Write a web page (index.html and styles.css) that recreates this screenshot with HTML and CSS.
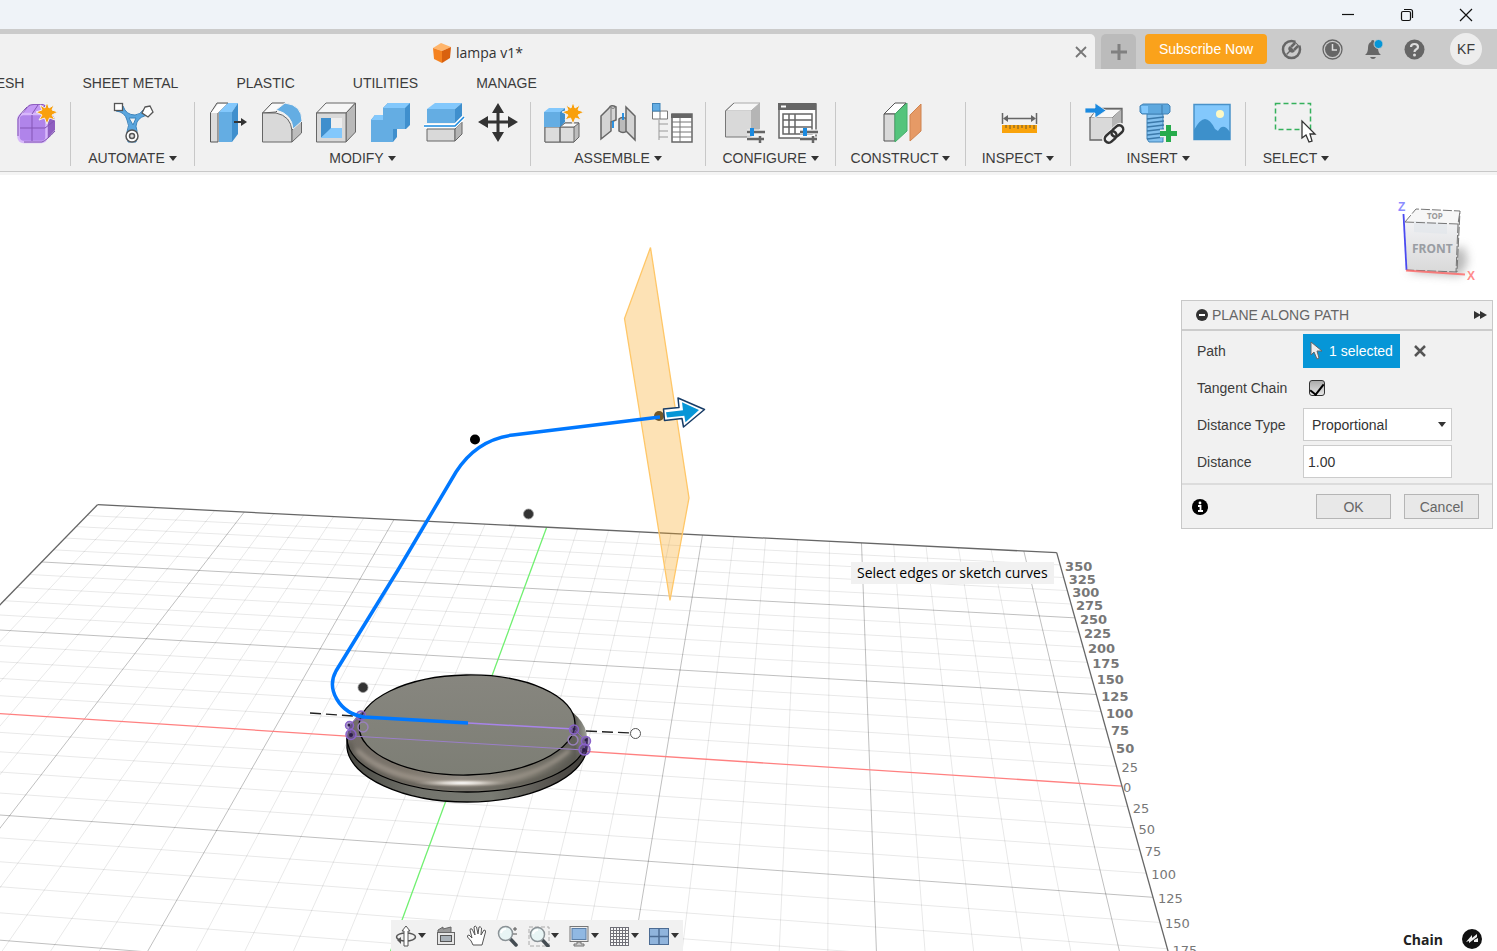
FILE: index.html
```html
<!DOCTYPE html>
<html lang="en">
<head>
  <meta charset="UTF-8" />
  <meta name="viewport" content="width=device-width, initial-scale=1" />
  <title>lampa v1*</title>
  <link rel="stylesheet" href="styles.css">
</head>
<body>
  <svg class="defs" aria-hidden="true">
    <defs>
      <path id="star" d="M0-11L2-5L7-8L5-3L11-1L5 2L8 7L2.500 5L0 11L-2.500 5L-8 7L-5 2L-11-1L-5-3L-7-8L-2-5Z" />
      <g id="sliders">
        <path d="M0 3H18M0 10H18" stroke="#f1f1f1" stroke-width="5" />
        <path d="M0 3H18M0 10H17M13 7V14" stroke="#666" stroke-width="2.500" />
        <path d="M5-1V7" stroke="#1b8ae0" stroke-width="4" />
      </g>
      <g id="glass">
        <path d="M12.500 13L19 20" stroke="#444c52" stroke-width="3.500" stroke-linecap="round" />
        <circle cx="8.500" cy="8.500" r="7" fill="#e8f5f5" stroke="#8a9296" stroke-width="1.500" />
        <path d="M4 8Q5 4 9 4" stroke="#fff" stroke-width="2" fill="none" />
      </g>
    </defs>
  </svg>

  <header class="titlebar">
    <button class="win-btn" aria-label="Minimize"><svg width="14" height="14" viewBox="0 0 14 14"><path d="M1 6.500H13" /></svg></button>
    <button class="win-btn" aria-label="Restore"><svg width="14" height="14" viewBox="0 0 14 14"><rect x="1.500" y="3.500" width="9" height="9" rx="1.500" /><path d="M4 1.500H10.500Q12.500 1.500 12.500 3.500V10" /></svg></button>
    <button class="win-btn" aria-label="Close"><svg width="14" height="14" viewBox="0 0 14 14"><path d="M1 1L13 13M13 1L1 13" /></svg></button>
  </header>

  <div class="tabbar">
    <div class="doc-tab">
      <div class="doc-name">
        <svg width="20" height="20" viewBox="0 0 20 20"><path d="M1 5L9 0L19 4L10 8Z" fill="#ffb56b" /><path d="M1 5L10 8V20L2 16Z" fill="#f58220" /><path d="M10 8L19 4L18 15L10 20Z" fill="#d9610f" /></svg>
        <span>lampa v1*</span>
      </div>
      <button class="tab-close" aria-label="Close tab"><svg width="12" height="12" viewBox="0 0 12 12"><path d="M1 1L11 11M11 1L1 11" stroke="#777" stroke-width="1.800" /></svg></button>
    </div>
    <button class="new-tab" aria-label="New tab"><svg width="16" height="16" viewBox="0 0 16 16"><path d="M8 0V16M0 8H16" stroke="#808080" stroke-width="3" /></svg></button>
    <button class="subscribe">Subscribe Now</button>
    <button class="top-icon" aria-label="Extensions"><svg width="21" height="21" viewBox="0 0 21 21"><circle cx="10.500" cy="10.500" r="8.500" fill="none" stroke="#666" stroke-width="2.500" /><path d="M5 15L8 12Q6 9 9 7L14 12Q12 15 9 13L6 16Z" fill="#666" /><path d="M10 8L14 4M13 11L17 7" stroke="#666" stroke-width="2.500" /><path d="M15 2L19 6" stroke="#cbcbcb" stroke-width="2" /></svg></button>
    <button class="top-icon" aria-label="Job status"><svg width="21" height="21" viewBox="0 0 21 21"><circle cx="10.500" cy="10.500" r="9.500" fill="#cbcbcb" stroke="#666" stroke-width="1.300" /><circle cx="10.500" cy="10.500" r="7.500" fill="#666" /><path d="M10.500 5V11H15" fill="none" stroke="#ddd" stroke-width="1.500" /></svg></button>
    <button class="top-icon" aria-label="Notifications"><svg width="21" height="21" viewBox="0 0 21 21"><path d="M2 16Q5 14 5 9Q5 4 8 3Q8 1 10 1Q11 1 12 3Q15 4 15 9Q15 14 18 16Z" fill="#666" /><path d="M7 18H13Q12 20 10 20Q8 20 7 18" fill="#666" /><circle cx="15.500" cy="5" r="4.500" fill="#0696d7" stroke="#cbcbcb" /></svg></button>
    <button class="top-icon" aria-label="Help"><svg width="21" height="21" viewBox="0 0 21 21"><circle cx="10.500" cy="10.500" r="10" fill="#666" /><path d="M7 8Q7 5 10.500 5Q14 5 14 8Q14 9.500 12 10.500Q10.500 11.500 10.500 13" fill="none" stroke="#ddd" stroke-width="2.200" /><circle cx="10.500" cy="16" r="1.500" fill="#ddd" /></svg></button>
    <button class="avatar">KF</button>
  </div>

  <div class="ribbon">
    <nav class="ribbon-tabs">
      <a href="#">MESH</a>
      <a href="#">SHEET METAL</a>
      <a href="#">PLASTIC</a>
      <a href="#">UTILITIES</a>
      <a href="#">MANAGE</a>
    </nav>
    <div class="tools">
      <div class="group group-first">
        <div class="icons">
          <button aria-label="Create form"><svg viewBox="0 0 40 40">
            <path d="M2 16L10 5Q12 2 16 2H26Q30 3 34 10L38 17V28L30 37Q27 40 24 40H7Q1 40 1 34Z" fill="#8f5fc0" />
            <path d="M3 15L11 5Q13 3 17 3H27L22 12H7Z" fill="#c59af5" />
            <rect x="1.500" y="12" width="28" height="28" rx="5" fill="#b084ea" stroke="#d8b8fb" stroke-width="2.500" />
            <path d="M3 26H28L37 19M15 13V39M15 12L21 3" stroke="#8355b5" fill="none" />
            <path d="M1 34V17Q2 13 10 5M7 40H25Q30 38 38 29" stroke="#7c4fae" fill="none" />
            <use href="#star" x="30" y="11" fill="#f9a00c" stroke="#f1f1f1" stroke-width="1" /></svg></button>
        </div>
      </div>
      <div class="group group-automate">
        <div class="icons">
          <button aria-label="Automated modeling"><svg viewBox="0 0 40 40">
            <path d="M3 7Q9 6 10 4Q13 13 22 13Q27 13 31 7L36 13Q27 14 24 20Q22 24 24 29L23 40H15L14 30Q17 23 14 18Q12 10 3 9Z" fill="#5aa6de" stroke="#3b83bb" />
            <path d="M16 16H23L20 23Z" fill="#f1f1f1" stroke="#3b83bb" />
            <rect x="1.500" y="1.500" width="8" height="7" fill="#fff" stroke="#555" stroke-width="1.300" />
            <path d="M32 5L37 4L40 10L35 15L29 11Z" fill="#fff" stroke="#555" stroke-width="1.300" />
            <circle cx="19" cy="34" r="6" fill="#fff" stroke="#555" stroke-width="1.500" /><circle cx="19" cy="34" r="2.500" fill="#ddd" stroke="#555" stroke-width="1.500" /></svg></button>
        </div>
        <button class="label">AUTOMATE</button>
      </div>
      <div class="group group-modify">
        <div class="icons">
          <button aria-label="Press pull"><svg viewBox="0 0 40 40">
            <path d="M2.500 11L9 1H20L10 11V40H2.500Z" fill="#dcdcdc" stroke="#555" /><path d="M3 11L10 2H19L10 11Z" fill="#fff" />
            <path d="M11 10H24V40H11Z" fill="#64ade3" /><path d="M11 10L20 1H30L24 10Z" fill="#83c8fc" /><path d="M24 10L30 1V32L24 40Z" fill="#3f8fcd" />
            <path d="M26 20H34" stroke="#333" stroke-width="2" /><path d="M33 16L39 20L33 24Z" fill="#333" /></svg></button>
          <button aria-label="Fillet"><svg viewBox="0 0 40 40">
            <path d="M.5 11L10 1H23L14 10Z" fill="#fafafa" stroke="#555" />
            <path d="M.5 11H14Q29 14 30 29V40H.5Z" fill="#d9d9d9" stroke="#666" /><path d="M30 28L39.500 18V31L30 40Z" fill="#bdbdbd" stroke="#666" />
            <path d="M14 8L23 1Q40 3 40 19L31 27Q30 12 14 8" fill="#64ade3" stroke="#f1f1f1" /></svg></button>
          <button aria-label="Shell"><svg viewBox="0 0 40 40">
            <path d="M.5 11L10 1H39.500L30 11Z" fill="#f6f6f6" stroke="#666" /><path d="M30 11L39.500 1V30L30 40Z" fill="#b9b9b9" stroke="#666" />
            <path d="M.5 11H30V40H.5Z" fill="#d9d9d9" stroke="#666" /><path d="M5 16H26V36H5Z" fill="#fff" />
            <path d="M5 16H15V27L5 36Z" fill="#3f8fcd" /><path d="M5 36L15 26H26V36Z" fill="#83c8fc" /><path d="M15 16H26V26H15Z" fill="#eee" /></svg></button>
          <button aria-label="Combine"><svg viewBox="0 0 40 40">
            <path d="M1 18L5 13H13V6L18 1H40V23L36 27H27V35L23 40H1Z" fill="#3f8fcd" />
            <path d="M1 18H13V6H35V27H23V40H1Z" fill="#64ade3" /><path d="M13 6L18 1H40L35 6ZM1 18L5 13H13V18Z" fill="#83c8fc" /></svg></button>
          <button aria-label="Split body"><svg viewBox="0 0 40 40">
            <path d="M3 7L11 1H38L31 7Z" fill="#83c8fc" /><path d="M3 7H31V21H3Z" fill="#64ade3" /><path d="M31 7L38 1V14L31 21Z" fill="#3f8fcd" />
            <path d="M3 27H31V39H3Z" fill="#d9d9d9" stroke="#666" /><path d="M31 27L38 20V32L31 39Z" fill="#b5b5b5" stroke="#666" />
            <path d="M0 24H31L40 15" fill="none" stroke="#fff" stroke-width="4" /><path d="M0 24H31L40 15" fill="none" stroke="#1b8ae0" stroke-width="1.500" /></svg></button>
          <button aria-label="Move"><svg viewBox="0 0 40 40">
            <path d="M20 6V34M6 20H34" stroke="#333" stroke-width="3" /><path d="M20 1L26 11H14ZM20 40L26 30H14ZM0 20L10 14V26ZM40 20L30 14V26Z" fill="#333" /></svg></button>
        </div>
        <button class="label">MODIFY</button>
      </div>
      <div class="group group-wide">
        <div class="icons">
          <button aria-label="New component"><svg viewBox="0 0 40 40">
            <path d="M1 25H16L21 21H35V35L30 40H1Z" fill="#bdbdbd" stroke="#666" /><path d="M1 25H30V40H1Z" fill="#dcdcdc" stroke="#666" /><path d="M16 25L21 21H35L30 25Z" fill="#f8f8f8" stroke="#666" /><path d="M16 25V40" stroke="#666" stroke-width="1.500" />
            <path d="M0 10L5 6H21L16 10Z" fill="#83c8fc" /><path d="M0 10H16V25H0Z" fill="#64ade3" /><path d="M16 10L21 6V20L16 25Z" fill="#3f8fcd" />
            <use href="#star" x="29" y="11" fill="#f9a00c" stroke="#f1f1f1" stroke-width="1" /></svg></button>
          <button aria-label="Joint"><svg viewBox="0 0 40 40">
            <path d="M3 14L11 6Q13 2 18 5V18L13 20V29L3 37Z" fill="#d4d4d4" stroke="#666" stroke-width="1.500" /><path d="M13 20V6M12 5Q15 8 18 5" stroke="#777" fill="none" />
            <path d="M21 17Q24 14 29 17V29Q25 32 21 29Z" fill="#bbb" stroke="#666" stroke-width="1.500" /><path d="M28 5L37 14V38L28 29Z" fill="#d4d4d4" stroke="#666" stroke-width="1.500" />
            <path d="M15 19V26M25 11V18" stroke="#1b8ae0" stroke-width="1.800" /></svg></button>
          <button aria-label="Bill of materials"><svg viewBox="0 0 40 40">
            <path d="M.5 9H15.500V17H.5ZM8 9V17" fill="#fff" stroke="#777" /><rect x=".5" y="1.500" width="7.500" height="7.500" fill="#64ade3" stroke="#3f83b8" />
            <path d="M7 18V38M7 22H16M7 29H16M7 35H16" stroke="#999" fill="none" />
            <rect x="20" y="12" width="20" height="28" fill="#fff" stroke="#666" stroke-width="1.500" /><path d="M19 14H40" stroke="#666" stroke-width="4" /><path d="M20 20H40M20 25H40M20 30H40M20 35H40M28 16V40" stroke="#777" /></svg></button>
        </div>
        <button class="label">ASSEMBLE</button>
      </div>
      <div class="group group-mid">
        <div class="icons">
          <button aria-label="Configure model"><svg viewBox="0 0 40 40">
            <path d="M1 9L10 1H36L27 9Z" fill="#f6f6f6" stroke="#aaa" /><path d="M27 9L36 1V27L27 35Z" fill="#b5b5b5" /><path d="M1.500 9H27V35H1.500Z" fill="#d9d9d9" /><path d="M10 1L1.500 9V35H27" fill="none" stroke="#777" />
            <use href="#sliders" x="23" y="27" /></svg></button>
          <button aria-label="Configuration table"><svg viewBox="0 0 40 40">
            <rect x="1" y="2" width="37" height="34" fill="#fff" stroke="#666" stroke-width="1.500" /><path d="M0 4.500H38" stroke="#666" stroke-width="7" /><path d="M3 4.500H8" stroke="#fff" stroke-width="2" />
            <path d="M5 12H34V32H5ZM5 18H34M5 25H34M11 12V32M17 12V32" fill="none" stroke="#666" stroke-width="1.500" />
            <use href="#sliders" x="22" y="27" /></svg></button>
        </div>
        <button class="label">CONFIGURE</button>
      </div>
      <div class="group group-mid">
        <div class="icons">
          <button aria-label="Offset plane"><svg viewBox="0 0 40 40">
            <path d="M3 12L14 1H25L14 12Z" fill="#fff" stroke="#555" /><path d="M3 12H14V39H3Z" fill="#d9d9d9" stroke="#555" />
            <path d="M14 12L26 1V29L14 40Z" fill="#55c47c" stroke="#45b06b" /><path d="M29 13L40 2V29L29 39Z" fill="#e69a66" stroke="#cf8450" /></svg></button>
        </div>
        <button class="label">CONSTRUCT</button>
      </div>
      <div class="group group-small">
        <div class="icons">
          <button aria-label="Measure"><svg viewBox="0 0 40 40">
            <path d="M4.500 11V22M38.500 11V22M7 16.500H36" stroke="#666" stroke-width="1.500" /><path d="M5 16.500L10 13V20ZM38 16.500L33 13V20Z" fill="#666" />
            <rect x="4" y="23" width="35" height="8" fill="#f9a30b" /><path d="M8 23V26M12 23V27M16 23V26M20 23V27M24 23V26M28 23V27M32 23V26M36 23V27" stroke="#6d5930" /></svg></button>
        </div>
        <button class="label">INSPECT</button>
      </div>
      <div class="group group-wide">
        <div class="icons">
          <button aria-label="Insert derive"><svg viewBox="0 0 40 40">
            <path d="M6 16L13 7H38L28 16Z" fill="#f8f8f8" stroke="#666" /><path d="M28 16L38 7V29L28 38Z" fill="#b5b5b5" /><path d="M6 16H28V38H6Z" fill="#d9d9d9" /><path d="M6 15V38H25M13 6.500H38V24" fill="none" stroke="#666" stroke-width="1.300" />
            <path d="M1 6H11V1L22 8.500L11 16V11H1Z" fill="#1b8ae0" stroke="#f1f1f1" stroke-width=".8" />
            <g fill="none" transform="rotate(-42 30 32)"><path d="M22 32H38" stroke="#f1f1f1" stroke-width="12" stroke-linecap="round" /><rect x="19" y="28" width="13" height="8" rx="4" stroke="#333" stroke-width="2.500" /><rect x="28" y="28" width="13" height="8" rx="4" stroke="#333" stroke-width="2.500" /></g></svg></button>
          <button aria-label="Insert fastener"><svg viewBox="0 0 40 40">
            <path d="M9 12H25V40H11L9 37Z" fill="#83c0ee" stroke="#3f83b8" /><path d="M9 17L26 15M9 21L26 19M9 25L26 23M9 29L26 27M9 33L26 31M9 37L26 35" stroke="#3b79aa" stroke-width="1.300" />
            <path d="M2 4L5 2H30L32 4V10L30 12H4L2 10Z" fill="#5ea8de" stroke="#4383b7" /><path d="M3 4H10V11H4Z" fill="#83c8fc" /><path d="M24 3V12" stroke="#3b79aa" />
            <path d="M30.500 23V40M22 31.500H39" stroke="#f1f1f1" stroke-width="8" /><path d="M30.500 23V40M22 31.500H39" stroke="#27ab4c" stroke-width="5" /></svg></button>
          <button aria-label="Insert canvas"><svg viewBox="0 0 40 40">
            <rect x="2" y="2.500" width="36" height="35" fill="#83c8fc" stroke="#4a92c9" stroke-width="1.500" /><path d="M2 28Q8 17 13 17Q18 17 23 27L26 29Q31 20 38 30V38H2Z" fill="#3d90cb" /><circle cx="28" cy="12" r="4" fill="#fdf9c4" /></svg></button>
        </div>
        <button class="label">INSERT</button>
      </div>
      <div class="group group-select">
        <div class="icons">
          <button aria-label="Select"><svg viewBox="0 0 40 40">
            <rect x="-.5" y="1.500" width="35" height="26" fill="none" stroke="#35b15c" stroke-width="1.500" stroke-dasharray="5 3" />
            <path d="M26 19V36L30 33L33 40L36 39L34 32H39Z" fill="#fff" stroke="#333" stroke-width="1.300" /></svg></button>
        </div>
        <button class="label">SELECT</button>
      </div>
    </div>
  </div>

  <main class="canvas">
    <svg class="scene" viewBox="0 175 1497 776" preserveAspectRatio="xMinYMin slice">
      <defs>
        <linearGradient id="side"><stop offset="0" stop-color="#484842" /><stop offset=".3" stop-color="#73746d" /><stop offset=".6" stop-color="#797b73" /><stop offset=".85" stop-color="#57544f" /><stop offset="1" stop-color="#403e3a" /></linearGradient>
        <linearGradient id="rim"><stop offset="0" stop-color="#706b64" /><stop offset=".25" stop-color="#7e776d" /><stop offset=".48" stop-color="#8f8a82" /><stop offset=".75" stop-color="#77746a" /><stop offset=".95" stop-color="#5f5e57" /><stop offset="1" stop-color="#a0a29a" /></linearGradient>
        <linearGradient id="face" x2="0" y2="1"><stop offset="0" stop-color="#87867f" /><stop offset="1" stop-color="#7d7e75" /></linearGradient>
        <radialGradient id="shine"><stop offset="0" stop-color="#fff" /><stop offset=".4" stop-color="#e4dfd8" stop-opacity=".8" /><stop offset="1" stop-color="#a8a095" stop-opacity="0" /></radialGradient>
        <linearGradient id="cube" x2="0" y2="1"><stop offset="0" stop-color="#f1f2f4" /><stop offset="1" stop-color="#d9d9d9" /></linearGradient>
        <filter id="soft" x="-10%" y="-50%" width="120%" height="200%"><feGaussianBlur stdDeviation="2" /></filter>
        <filter id="shadow" x="-50%" y="-50%" width="200%" height="200%"><feGaussianBlur stdDeviation="5" /></filter>
        <clipPath id="rim-clip"><ellipse cx="467" cy="738" rx="120" ry="54" /></clipPath>
      </defs>

      <g id="grid"></g>
      <g id="ruler" class="ruler"></g>

      <!-- lamp base -->
      <path d="M347 738V748C350 777 402 802 467 802S584 777 587 748V738Z" fill="url(#side)" stroke="#000" stroke-width="1.300" />
      <ellipse cx="467" cy="738" rx="120" ry="54" fill="url(#rim)" />
      <g clip-path="url(#rim-clip)">
        <g fill="none" filter="url(#soft)">
          <path d="M349 742C357 774 410 789 467 789S576 774 585 742" stroke="#57554e" stroke-width="3" />
          <path d="M357 750C380 773 420 783 463 783S540 775 570 750" stroke="#aba297" stroke-width="3" />
        </g>
        <ellipse cx="462" cy="783" rx="48" ry="4" fill="url(#shine)" />
      </g>
      <path d="M347 738C347 768 401 792 467 792S587 768 587 738" fill="none" stroke="#000" stroke-width="1.300" />
      <ellipse cx="467" cy="725" rx="108" ry="50" fill="url(#face)" stroke="#000" stroke-width="1.300" transform="rotate(-1 467 725)" />

      <path d="M310 713L353 716M586 731L630 733" stroke="#222" stroke-width="1.300" stroke-dasharray="11 5" />
      <circle cx="635.500" cy="733.500" r="5" fill="#fff" stroke="#555" />
      <g fill="none" stroke="#8a63c9" stroke-width="1.500">
        <path d="M468 723L574 729" stroke="#a884ea" />
        <path d="M352 736L584 750" stroke="#9a7fc8" stroke-width="1" />
        <circle cx="363" cy="727" r="5" stroke="#9880bb" /><circle cx="573" cy="740" r="5" stroke="#9880bb" />
        <path d="M361 715L349 725L351 735M574 729L586 741L584 750" stroke-width="1" />
        <g fill="#5d3f94" fill-opacity=".5"><circle cx="361" cy="715.500" r="4.500" /><circle cx="349.500" cy="725.500" r="4" /><circle cx="351" cy="734.500" r="5" /><circle cx="574" cy="729.500" r="4.500" /><circle cx="586" cy="741" r="4.500" /><circle cx="584.500" cy="749.500" r="5.500" /></g>
        <g fill="#2c1d48" stroke="none"><circle cx="349" cy="725" r="1.500" /><circle cx="351" cy="735" r="2" /><circle cx="574" cy="729" r="1.500" /><circle cx="586" cy="740" r="1.500" /><circle cx="584" cy="750" r="2" /></g>
      </g>

      <!-- selected path, construction plane and drag arrow -->
      <circle cx="659" cy="416" r="5" fill="#333" />
      <path d="M650.500 247.500L689 498L670 600.500L624.500 318.500Z" fill="#faa61a" fill-opacity=".32" stroke="#ffc768" stroke-width="1.300" />
      <path d="M660 417L513 435C489 438 470 450 456 472L398 570L336 671C326 689 339 713 364 717L468 723" fill="none" stroke="#0078ff" stroke-width="3.500" />
      <g><circle cx="475" cy="439.500" r="5" fill="#000" /><circle cx="528.500" cy="514" r="5" fill="#333" stroke="#999" stroke-width=".8" /><circle cx="363" cy="687.500" r="5" fill="#333" stroke="#999" stroke-width=".8" /></g>
      <path d="M663.500 409L679 407.500L678 398L704.500 409.500L683.500 427L682 418.500L664.500 420.500Z" fill="#fff" stroke="#173c66" stroke-width="1.500" stroke-linejoin="round" />
      <path d="M666 412.300L683 410.300L682 402.300L699 410L685.500 422.300L684.300 415.800L667 417.500Z" fill="#0696d7" />

      <!-- view cube -->
      <path d="M1406 272L1460 276L1468 262L1464 246L1440 255Z" fill="#777" opacity=".5" filter="url(#shadow)" />
      <path d="M1405 222L1416 209L1460 211L1458 224Z" fill="#f7f7f7" /><path d="M1458 224L1460 211L1458 258L1456 272Z" fill="#ccc" />
      <path d="M1405 222L1458 224L1456 272L1407 270Z" fill="url(#cube)" />
      <path d="M1414 221L1447 223V234L1414 232Z" fill="#dfe4ea" opacity=".6" />
      <path d="M1405 222L1416 209L1460 211L1457 272L1407 270M1405 222L1458 224L1460 211M1458 224L1456 272" fill="none" stroke="#777" stroke-dasharray="9 2" />
      <path d="M1403.500 214L1406.500 270" stroke="#4a4af0" stroke-width="1.800" /><path d="M1406 270.500L1465 274.500" stroke="#f66" stroke-width="1.800" opacity=".8" />
      <text class="cube-front" x="1412" y="253">FRONT</text><text class="cube-top" x="1427" y="219">TOP</text>
      <text class="axis-z" x="1398" y="211">Z</text><text class="axis-x" x="1467" y="280">X</text>
    </svg>

    <div class="tooltip">Select edges or sketch curves</div>

    <form class="panel">
      <div class="panel-head">
        <svg width="12" height="12" viewBox="0 0 12 12"><circle cx="6" cy="6" r="6" fill="#333" /><path d="M3 6H9" stroke="#fff" stroke-width="2" /></svg>
        <h2>PLANE ALONG PATH</h2>
        <svg width="13" height="8" viewBox="0 0 13 8"><path d="M0 0L7 4L0 8ZM6 0L13 4L6 8Z" fill="#333" /></svg>
      </div>
      <div class="panel-body">
        <label for="path">Path</label>
        <div class="field">
          <button type="button" id="path" class="selected"><svg width="13" height="19" viewBox="0 0 13 19"><path d="M1 1V14L4 11L7 18L9 17L7 10H12Z" fill="#eee" stroke="#666" /></svg>1 selected</button>
          <button type="button" class="clear" aria-label="Clear selection"><svg width="12" height="12" viewBox="0 0 12 12"><path d="M1 1L11 11M11 1L1 11" stroke="#555" stroke-width="2.500" /></svg></button>
        </div>
        <label for="tangent">Tangent Chain</label>
        <div class="field"><input type="checkbox" id="tangent" checked></div>
        <label for="type">Distance Type</label>
        <div class="field select"><select id="type"><option>Proportional</option><option>Physical</option></select></div>
        <label for="distance">Distance</label>
        <div class="field"><input type="text" id="distance" value="1.00"></div>
      </div>
      <div class="panel-foot">
        <svg width="16" height="16" viewBox="0 0 16 16"><circle cx="8" cy="8" r="8" fill="#000" /><path d="M6 7H8.500V12M6 12H11" stroke="#fff" stroke-width="1.800" fill="none" /><circle cx="8" cy="4" r="1.400" fill="#fff" /></svg>
        <button type="button">OK</button>
        <button type="button">Cancel</button>
      </div>
    </form>

    <div class="navbar">
      <button class="more" aria-label="Orbit"><svg viewBox="0 0 22 22"><ellipse cx="11" cy="12" rx="9.500" ry="4" fill="none" stroke="#555" stroke-width="1.500" /><path d="M9 21V6H7L11 1L15 6H13V21Z" fill="#fff" stroke="#555" /><path d="M6 12V19L2 15Z" fill="#555" /></svg></button>
      <button aria-label="Look at"><svg viewBox="0 0 22 22"><path d="M3 8V5L8 2V4L12 3L16 2V8" fill="#999" stroke="#666" /><rect x="2.500" y="7.500" width="17" height="12" fill="#e6e6e6" stroke="#666" /><rect x="5.500" y="10.500" width="11" height="6" fill="#a9b1b8" stroke="#555" /></svg></button>
      <button aria-label="Pan"><svg viewBox="0 0 22 22"><path d="M7 20Q6 16 1.500 12Q1 10 3 10L6 13L4 5Q4 3 6 4L9 10L8 2Q9 0 10.500 2L12 9L13 2Q14 1 15.500 3L15 10L18 5Q20 5 19.500 7L16 20Z" fill="#fff" stroke="#555" stroke-linejoin="round" /></svg></button>
      <button aria-label="Zoom"><svg viewBox="0 0 22 22"><use href="#glass" /><path d="M16 4H20M18 2V6M16 9H20" stroke="#555" /></svg></button>
      <button class="more" aria-label="Fit"><svg viewBox="0 0 22 22"><path d="M1 2H21V21H1Z" fill="none" stroke="#aaa" stroke-dasharray="4 2" /><use href="#glass" x="1" y="1" /></svg></button>
      <button class="more" aria-label="Display settings"><svg viewBox="0 0 22 22"><rect x="2" y="1.500" width="18" height="15" fill="#eee" stroke="#777" /><rect x="4" y="3.500" width="14" height="11" fill="#90b8e2" stroke="#5b7fa8" /><path d="M9 17H13V19H16V21H6V19H9Z" fill="#ccc" stroke="#777" /></svg></button>
      <button class="more" aria-label="Grid and snaps"><svg viewBox="0 0 22 22"><rect x="2" y="2" width="18" height="18" fill="#f8f8f8" /><path d="M2.500 2V20M5.500 2V20M8.500 2V20M11.500 2V20M14.500 2V20M17.500 2V20M20.500 2V20M2 2.500H21M2 5.500H21M2 8.500H21M2 11.500H21M2 14.500H21M2 17.500H21M2 20.500H21" stroke="#707078" /></svg></button>
      <button class="more" aria-label="Viewports"><svg viewBox="0 0 22 22"><rect x="1.500" y="3.500" width="19" height="16" fill="#90b4dc" stroke="#4c6c94" /><path d="M11 3V20M1 11.500H21" stroke="#4c6c94" stroke-width="1.500" /></svg></button>
    </div>

    <div class="status">
      <span>Chain</span>
      <svg width="20" height="20" viewBox="0 0 20 20"><circle cx="10" cy="10" r="10" fill="#111" /><path d="M4 13L10 6V9L15 5V8L7 14V12ZM12 11L16 9V13H12Z" fill="#eee" /></svg>
    </div>
  </main>

<script src="script.js"></script>
</body>
</html>
```
FILE: styles.css
```css
* {
  box-sizing: border-box;
}
body {
  margin: 0;
  height: 100vh;
  display: flex;
  flex-direction: column;
  overflow: hidden;
  font-family: "Liberation Sans", Arial, sans-serif;
  font-size: 14px;
  color: #3c3c3c;
  background: #fff;
}
button {
  border: none;
  padding: 0;
  background: none;
  font: inherit;
  color: inherit;
}
svg {
  display: block;
  flex: none;
}
.defs {
  position: absolute;
  width: 0;
  height: 0;
}

/* window */
.titlebar {
  flex: none;
  height: 29px;
  display: flex;
  justify-content: flex-end;
  background: #eff3f8;
}
.win-btn {
  width: 59px;
  display: flex;
  align-items: center;
  justify-content: center;
}
.win-btn:last-child {
  margin-right: 2px;
}
.win-btn path,
.win-btn rect {
  fill: none;
  stroke: #111;
  stroke-width: 1.2;
}
.tabbar {
  flex: none;
  height: 40px;
  display: flex;
  align-items: center;
  background: #cbcbcb;
}
.doc-tab {
  flex: 1;
  height: 35px;
  align-self: flex-end;
  display: flex;
  align-items: center;
  padding-right: 8px;
  background: #f1f1f1;
  border-radius: 0 5px 0 0;
}
.doc-name {
  flex: 1;
  display: flex;
  align-items: center;
  justify-content: center;
  gap: 4px;
  padding: 2px 120px 0 0;
  font-family: "Open Sans", "Noto Sans", sans-serif;
  color: #333;
}
.new-tab {
  width: 35px;
  height: 35px;
  align-self: flex-end;
  margin: 0 9px 0 6px;
  display: flex;
  align-items: center;
  justify-content: center;
  background: #bbb;
  border-radius: 5px 5px 0 0;
}
.subscribe {
  width: 122px;
  height: 30px;
  margin-right: 14px;
  background: #faa21b;
  border-radius: 4px;
  color: #fff;
}
.top-icon {
  margin-right: 20px;
}
.top-icon svg {
  width: 21px;
}
.avatar {
  width: 32px;
  height: 32px;
  margin: 0 15px 0 5px;
  border-radius: 50%;
  background: #ededed;
}

/* ribbon */
.ribbon {
  flex: none;
  background: #f1f1f1;
  border-bottom: 3px solid #f4f4f4;
}
.ribbon-tabs {
  height: 28px;
  display: flex;
  align-items: center;
  gap: 58px;
  margin-left: -16px;
}
.ribbon-tabs a {
  color: inherit;
  text-decoration: none;
}
.tools {
  display: flex;
  padding: 5px 0;
  border-bottom: 1px solid #c8c8c8;
}
.group {
  height: 64px;
  display: flex;
  flex-direction: column;
  align-items: center;
  justify-content: space-between;
  border-right: 1px solid #c8c8c8;
}
.group-first {
  width: 71px;
  padding-left: 4px;
}
.group-automate {
  width: 124px;
}
.group-modify {
  width: 336px;
}
.group-wide {
  width: 175px;
}
.group-mid {
  width: 130px;
}
.group-small {
  width: 105px;
}
.group-select {
  width: 100px;
  border: none;
}
.icons {
  display: flex;
}
.icons button {
  width: 54px;
  display: flex;
  justify-content: center;
}
.icons svg {
  width: 40px;
  height: 40px;
  overflow: visible;
}
.label,
.more {
  display: flex;
  align-items: center;
}
.label {
  gap: 4px;
}
.label::after,
.more::after,
.select::after {
  content: "";
  border: 4px solid transparent;
  border-top: 5px solid #333;
  border-bottom: none;
}

/* viewport */
.canvas {
  flex: 1;
  min-height: 0;
  position: relative;
  overflow: hidden;
}
.scene {
  width: 100%;
  height: 100%;
}
.minor {
  stroke: #000;
  stroke-opacity: 0.09;
}
.major {
  stroke: #000;
  stroke-opacity: 0.25;
}
.edge {
  stroke: #666;
  stroke-width: 1.3;
}
.axis-red {
  stroke: #ff8080;
  stroke-width: 1.3;
}
.axis-green {
  stroke: #70f070;
  stroke-width: 1.3;
}
.ruler {
  font-family: "DejaVu Sans", sans-serif;
  font-size: 13px;
  fill: #777;
}
.ruler .far {
  font-weight: bold;
}
.cube-front {
  font: bold 12px "Noto Sans", sans-serif;
  fill: #999da3;
}
.cube-top {
  font: bold 8px "Noto Sans", sans-serif;
  fill: #999;
}
.axis-z,
.axis-x {
  font: bold 12px "Liberation Sans", sans-serif;
  fill: #8c8cff;
}
.axis-x {
  fill: #ff8c8c;
}
.tooltip {
  position: absolute;
  left: 851px;
  top: 387px;
  height: 22px;
  padding: 0 6px;
  line-height: 22px;
  background: #f1f1f1;
  color: #000;
  font-family: "Open Sans", "Noto Sans", sans-serif;
}

/* dialog */
.panel {
  position: absolute;
  top: 125px;
  right: 4px;
  width: 312px;
  background: #f1f1f1;
  border: 1px solid #c8c8c8;
}
.panel-head {
  height: 30px;
  display: flex;
  align-items: center;
  gap: 4px;
  padding: 0 5px 0 14px;
  border-bottom: 2px solid #ccc;
}
.panel-head h2 {
  flex: 1;
  margin: 0;
  font-size: 14px;
  font-weight: normal;
  color: #666;
}
.panel-body {
  display: grid;
  grid-template-columns: 106px 1fr;
  grid-auto-rows: 37px;
  align-items: center;
  padding: 1px 0 3px 15px;
  border-bottom: 2px solid #dcdcdc;
}
.field {
  display: flex;
  align-items: center;
}
.selected {
  width: 97px;
  height: 34px;
  display: flex;
  align-items: center;
  justify-content: center;
  gap: 6px;
  background: #0696d7;
  color: #fff;
}
.clear {
  margin-left: 14px;
}
.panel input[type="checkbox"] {
  appearance: none;
  width: 16px;
  height: 16px;
  margin: 0 6px;
  border: 1px solid #333;
  border-radius: 3px;
  background: linear-gradient(#aaa, #e6e6e6);
  display: flex;
  justify-content: center;
}
.panel input[type="checkbox"]:checked::after {
  content: "";
  width: 6px;
  height: 12px;
  border: solid #000;
  border-width: 0 2px 2px 0;
  transform: rotate(38deg);
}
.panel select,
.panel input[type="text"] {
  width: 149px;
  height: 33px;
  padding: 0 8px;
  border: 1px solid #ccc;
  border-radius: 0;
  background: #fff;
  color: #333;
  font: inherit;
}
.panel select {
  appearance: none;
}
.panel input[type="text"] {
  padding: 0 4px;
}
.select::after {
  margin-left: -14px;
  pointer-events: none;
}
.panel-foot {
  height: 43px;
  display: flex;
  align-items: center;
  gap: 13px;
  padding: 0 13px 0 10px;
}
.panel-foot svg {
  margin-right: auto;
}
.panel-foot button {
  width: 75px;
  height: 25px;
  border: 1px solid #b5b5b5;
  background: #e8e8e8;
  color: #666;
}

/* bottom bars */
.navbar {
  position: absolute;
  left: 391px;
  bottom: 0;
  height: 31px;
  display: flex;
  align-items: center;
  gap: 9px;
  padding: 0 4px;
  background: #f1f1f1;
}
.navbar svg {
  width: 22px;
  height: 22px;
}
.more {
  gap: 1px;
}
.status {
  position: absolute;
  right: 15px;
  bottom: 2px;
  display: flex;
  align-items: center;
  gap: 19px;
  font-family: "Open Sans", "Noto Sans", sans-serif;
  font-weight: bold;
  color: #222;
}
```
FILE: script.js
```js
// ground plane corners: [cell x, cell y, screen x, screen y]
const corners = [
  [-15, 15, 97.5, 504.7],
  [16, 15, 1056.7, 552.7],
  [16, -5, 1153, 897.3],
  [-10, -5, 9.6, 815.7]
];

function solve(m) {
  const n = m.length;
  for (let i = 0; i < n; i++) {
    let p = i;
    for (let r = i + 1; r < n; r++) {
      if (Math.abs(m[r][i]) > Math.abs(m[p][i])) p = r;
    }
    [m[i], m[p]] = [m[p], m[i]];
    for (let r = 0; r < n; r++) {
      if (r === i) continue;
      const f = m[r][i] / m[i][i];
      for (let c = i; c <= n; c++) m[r][c] -= f * m[i][c];
    }
  }
  return m.map((row, i) => row[n] / row[i]);
}

const rows = [];
corners.forEach(([x, y, u, v]) => {
  rows.push([x, y, 1, 0, 0, 0, -u * x, -u * y, u]);
  rows.push([0, 0, 0, x, y, 1, -v * x, -v * y, v]);
});
const h = solve(rows);

function project(x, y) {
  const w = h[6] * x + h[7] * y + 1;
  return [(h[0] * x + h[1] * y + h[2]) / w, (h[3] * x + h[4] * y + h[5]) / w];
}

const svgNS = "http://www.w3.org/2000/svg";
const grid = document.getElementById("grid");
const ruler = document.getElementById("ruler");

function addLine(a, b, cls) {
  const line = document.createElementNS(svgNS, "path");
  line.setAttribute("d", `M${project(...a)}L${project(...b)}`);
  line.setAttribute("class", cls);
  grid.appendChild(line);
}

const left = -15, right = 16, back = 15, front = -13;
for (let x = left + 1; x < right; x++) {
  if (x !== 0) addLine([x, back], [x, front], x % 5 ? "minor" : "major");
}
for (let y = front; y < back; y++) {
  if (y !== 0) addLine([left, y], [right, y], y % 5 ? "minor" : "major");
}
addLine([left, 0], [right, 0], "axis-red");
addLine([0, back], [0, front], "axis-green");
addLine([left, back], [right, back], "edge");
addLine([left, back], [left, front], "edge");
addLine([right, back], [right, front], "edge");

for (let y = 14; y >= -7; y--) {
  const [px, py] = project(right, y);
  const text = document.createElementNS(svgNS, "text");
  text.setAttribute("x", px + (y === 0 ? 1 : 5));
  text.setAttribute("y", py + 6);
  if (y > 1) text.setAttribute("class", "far");
  text.textContent = Math.abs(y * 25);
  ruler.appendChild(text);
}
```
